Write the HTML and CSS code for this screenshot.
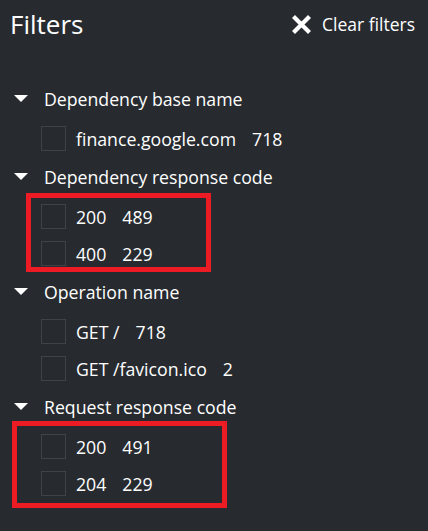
FILE: index.html
```html
<!DOCTYPE html>
<html lang="en">
<head>
<meta charset="utf-8">
<title>Filters</title>
<link rel="stylesheet" href="styles.css">
</head>
<body>
<div class="panel">
  <div class="topbar">
    <h1 class="title">Filters</h1>
    <button class="clear">
      <svg class="clear-icon" width="21" height="19" viewBox="0 0 21 19">
        <path d="M2.5 1.5 L18.5 17.5 M18.5 1.5 L2.5 17.5" stroke="#fff" stroke-width="4.2" fill="none"/>
      </svg>
      <span>Clear filters</span>
    </button>
  </div>

  <div class="groups">
    <div class="group">
      <div class="group-head"><span class="caret"></span><span>Dependency base name</span></div>
      <div class="item"><span class="box"></span><span class="label">finance.google.com</span><span class="count">718</span></div>
    </div>
    <div class="group">
      <div class="group-head"><span class="caret"></span><span>Dependency response code</span></div>
      <div class="item"><span class="box"></span><span class="label">200</span><span class="count">489</span></div>
      <div class="item"><span class="box"></span><span class="label">400</span><span class="count">229</span></div>
    </div>
    <div class="group">
      <div class="group-head"><span class="caret"></span><span>Operation name</span></div>
      <div class="item"><span class="box"></span><span class="label">GET /</span><span class="count">718</span></div>
      <div class="item"><span class="box"></span><span class="label">GET /favicon.ico</span><span class="count">2</span></div>
    </div>
    <div class="group">
      <div class="group-head"><span class="caret"></span><span>Request response code</span></div>
      <div class="item"><span class="box"></span><span class="label">200</span><span class="count">491</span></div>
      <div class="item"><span class="box"></span><span class="label">204</span><span class="count">229</span></div>
    </div>
  </div>

  <div class="mark mark-one"></div>
  <div class="mark mark-two"></div>
</div>
</body>
</html>
```

FILE: styles.css
```css
html, body {
  margin: 0;
  padding: 0;
  background: #272b30;
}

body {
  width: 428px;
  height: 531px;
  overflow: hidden;
  font-family: "Open Sans", "Noto Sans", sans-serif;
  color: #ffffff;
}

.panel {
  position: relative;
  width: 428px;
  height: 531px;
}

.topbar {
  height: 79px;
  display: flex;
  justify-content: space-between;
  align-items: flex-start;
  padding: 0 13px 0 10px;
  box-sizing: border-box;
}

.title {
  margin: 6px 0 0 0;
  font-size: 26px;
  line-height: 36px;
  font-weight: 400;
}

.clear {
  display: flex;
  align-items: center;
  gap: 10px;
  margin-top: 12px;
  padding: 0;
  border: none;
  background: none;
  color: #ffffff;
  font-family: inherit;
  font-size: 17.5px;
  line-height: 24px;
}

.clear-icon {
  display: block;
}

.group-head {
  height: 41px;
  display: flex;
  align-items: center;
  gap: 16px;
  padding-left: 14px;
  font-size: 17.7px;
  line-height: 41px;
}

.caret {
  width: 0;
  height: 0;
  border-left: 7px solid transparent;
  border-right: 7px solid transparent;
  border-top: 7px solid #ffffff;
  margin-top: -3px;
}

.item {
  height: 37px;
  display: flex;
  align-items: center;
  padding-left: 41px;
  font-size: 17.7px;
}

.box {
  width: 25px;
  height: 25px;
  box-sizing: border-box;
  border: 1px solid #3f4348;
  margin-right: 10px;
}

.count {
  margin-left: 16px;
}

.mark {
  position: absolute;
  border: 5px solid #ed1c24;
  box-sizing: border-box;
}

.mark-one {
  left: 26px;
  top: 193px;
  width: 185px;
  height: 79px;
}

.mark-two {
  left: 12px;
  top: 421px;
  width: 215px;
  height: 87px;
}
```
